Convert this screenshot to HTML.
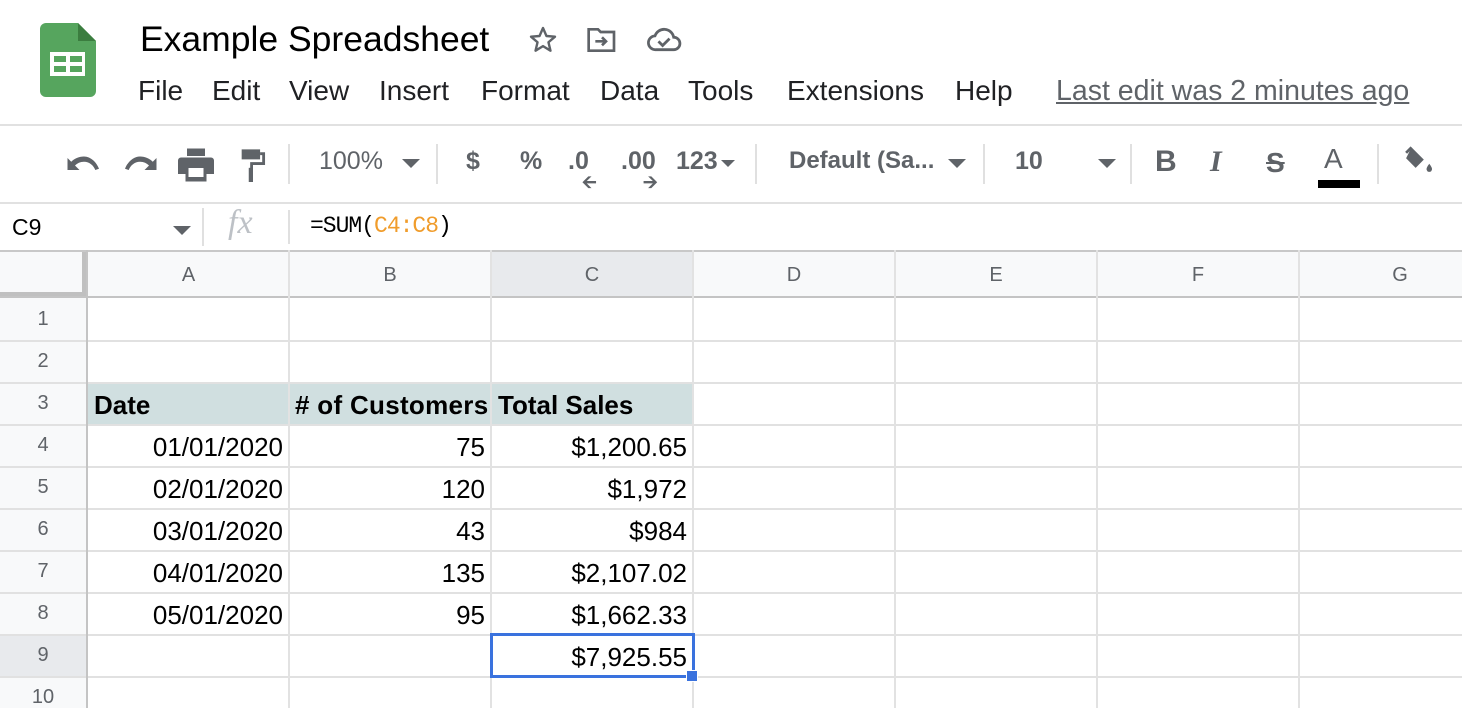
<!DOCTYPE html>
<html><head><style>
*{margin:0;padding:0;box-sizing:border-box}
body{width:1462px;height:708px;overflow:hidden;background:#fff;font-family:"Liberation Sans",Arial,sans-serif;position:relative}
.a{position:absolute;white-space:nowrap}
.menu{top:75px;font-size:28px;color:#202124}
.tb{top:147px;font-size:25px;color:#5f6368}
.sep{position:absolute;width:2px;background:#e0e0e0}
.hl{position:absolute;left:0;width:1462px;height:2px;background:#e1e1e1}
.vl{position:absolute;width:2px;background:#e2e2e2}
.ch{position:absolute;top:264px;font-size:20px;color:#5f6368;text-align:center}
.rn{position:absolute;left:0;width:86px;font-size:20px;color:#5f6368;text-align:center}
.c{position:absolute;font-size:26px;color:#000;text-align:right}
</style></head><body>
<svg class="a" style="left:40px;top:23px" width="56" height="74" viewBox="0 0 56 74"><path d="M6 0H38L56 18V68a6 6 0 0 1-6 6H6a6 6 0 0 1-6-6V6a6 6 0 0 1 6-6z" fill="#56a55e"/><path d="M38 0L56 18H38z" fill="#3b7d3f"/><rect x="10" y="29" width="35" height="24" fill="#fff"/><rect x="14" y="33" width="12" height="6" fill="#56a55e"/><rect x="30" y="33" width="12" height="6" fill="#56a55e"/><rect x="14" y="43" width="12" height="6" fill="#56a55e"/><rect x="30" y="43" width="12" height="6" fill="#56a55e"/></svg>
<div class="a" style="left:140px;top:19px;font-size:35.5px;color:#000">Example Spreadsheet</div>
<svg class="a" style="left:527px;top:24px" width="32" height="32" viewBox="0 0 24 24"><path d="M12 3l2.6 6 6.4.5-4.9 4.2 1.5 6.3L12 16.6 6.4 20l1.5-6.3L3 9.5 9.4 9z" fill="none" stroke="#5f6368" stroke-width="1.8" stroke-linejoin="round"/></svg>
<svg class="a" style="left:586px;top:26px" width="32" height="28" viewBox="0 0 24 20"><path d="M2 2h7l2 2h10v14H2z" fill="none" stroke="#5f6368" stroke-width="2"/><path d="M7 11h8M12 8l3 3-3 3" fill="none" stroke="#5f6368" stroke-width="2"/></svg>
<svg class="a" style="left:646px;top:26px" width="36" height="28" viewBox="0 0 26 20"><path d="M7 17a5 5 0 0 1-.5-10A7 7 0 0 1 20 8a4.5 4.5 0 0 1 0 9z" fill="none" stroke="#5f6368" stroke-width="2"/><path d="M9 11l3 3 5-5" fill="none" stroke="#5f6368" stroke-width="2"/></svg>
<div class="a menu" style="left:138px">File</div>
<div class="a menu" style="left:212px">Edit</div>
<div class="a menu" style="left:289px">View</div>
<div class="a menu" style="left:379px">Insert</div>
<div class="a menu" style="left:481px">Format</div>
<div class="a menu" style="left:600px">Data</div>
<div class="a menu" style="left:688px">Tools</div>
<div class="a menu" style="left:787px">Extensions</div>
<div class="a menu" style="left:955px">Help</div>
<div class="a menu" style="left:1056px;color:#5f6368;text-decoration:underline;font-size:28.5px">Last edit was 2 minutes ago</div>
<div class="hl" style="top:124px"></div>
<svg class="a" style="left:66px;top:150px" width="36" height="28" viewBox="0 0 24 18"><path d="M12 4C8.5 4 5.5 5.5 3.5 7.5L1 5v8h8L6 10c1.5-1.5 3.5-2.5 6-2.5 3.5 0 6.5 2.5 7.5 5.5l2.5-.8C20.5 8 16.5 4 12 4z" fill="#5f6368"/></svg>
<svg class="a" style="left:122px;top:150px" width="36" height="28" viewBox="0 0 24 18"><g transform="matrix(-1 0 0 1 24 0)"><path d="M12 4C8.5 4 5.5 5.5 3.5 7.5L1 5v8h8L6 10c1.5-1.5 3.5-2.5 6-2.5 3.5 0 6.5 2.5 7.5 5.5l2.5-.8C20.5 8 16.5 4 12 4z" fill="#5f6368"/></g></svg>
<svg class="a" style="left:178px;top:148px" width="36" height="34" viewBox="0 0 24 22"><path d="M6 0h12v5H6z M2 6h20a2 2 0 0 1 2 2v9h-5v5H5v-5H0V8a2 2 0 0 1 2-2z" fill="#5f6368"/><rect x="7" y="13" width="10" height="6" fill="#fff"/></svg>
<svg class="a" style="left:238px;top:148px" width="30" height="34" viewBox="0 0 20 24"><path d="M2 1h13v7H2z" fill="#5f6368"/><path d="M15 4h2.5v7H9v4" fill="none" stroke="#5f6368" stroke-width="2"/><rect x="7" y="14" width="3" height="10" fill="#5f6368"/></svg>
<div class="sep" style="left:288px;top:144px;height:40px"></div>
<div class="a tb" style="left:319px">100%</div>
<svg class="a" style="left:402px;top:159px" width="18" height="10"><path d="M0 0h18L9 9z" fill="#5f6368"/></svg>
<div class="sep" style="left:436px;top:144px;height:40px"></div>
<div class="a tb" style="left:466px;font-weight:bold">$</div>
<div class="a tb" style="left:520px;font-weight:bold">%</div>
<div class="a tb" style="left:568px;font-weight:bold">.0</div>
<div class="a" style="left:582px;top:170px;font-size:18px;color:#5f6368;font-weight:bold">&#129128;</div>
<div class="a tb" style="left:621px;font-weight:bold">.00</div>
<div class="a" style="left:643px;top:170px;font-size:18px;color:#5f6368;font-weight:bold">&#129130;</div>
<div class="a tb" style="left:676px;font-weight:bold">123</div>
<svg class="a" style="left:721px;top:160px" width="14" height="8"><path d="M0 0h14L7 7z" fill="#5f6368"/></svg>
<div class="sep" style="left:755px;top:144px;height:40px"></div>
<div class="a tb" style="left:789px;font-weight:bold;font-size:24px">Default (Sa...</div>
<svg class="a" style="left:948px;top:159px" width="18" height="10"><path d="M0 0h18L9 9z" fill="#5f6368"/></svg>
<div class="sep" style="left:983px;top:144px;height:40px"></div>
<div class="a tb" style="left:1015px;font-weight:bold">10</div>
<svg class="a" style="left:1098px;top:159px" width="18" height="10"><path d="M0 0h18L9 9z" fill="#5f6368"/></svg>
<div class="sep" style="left:1130px;top:144px;height:40px"></div>
<div class="a tb" style="left:1155px;font-size:30px;font-weight:bold;top:145px">B</div>
<div class="a tb" style="left:1210px;font-size:30px;font-weight:bold;font-style:italic;font-family:'Liberation Serif',serif;top:145px">I</div>
<div class="a tb" style="left:1266px;font-size:28px;font-weight:bold;text-decoration:line-through;top:147px">S</div>
<div class="a tb" style="left:1324px;font-size:28px;top:143px">A</div>
<div class="a" style="left:1318px;top:180px;width:42px;height:8px;background:#000"></div>
<div class="sep" style="left:1377px;top:144px;height:40px"></div>
<svg class="a" style="left:1400px;top:146px" width="34" height="30" viewBox="0 0 24 22"><path d="M8 1l9 9-6 6-7-7z" fill="#5f6368"/><path d="M8 1L4 5" stroke="#5f6368" stroke-width="2"/><path d="M21 13c-1.5 2-2 3-2 4a2 2 0 0 0 4 0c0-1-.5-2-2-4z" fill="#5f6368"/></svg>
<div class="hl" style="top:202px"></div>
<div class="a" style="left:12px;top:214px;font-size:23px;color:#000">C9</div>
<svg class="a" style="left:173px;top:226px" width="18" height="10"><path d="M0 0h18L9 9z" fill="#5f6368"/></svg>
<div class="sep" style="left:202px;top:208px;height:38px"></div>
<div class="a" style="left:228px;top:204px;font-size:34px;font-style:italic;color:#bdc1c6;font-family:'Liberation Serif',serif">fx</div>
<div class="sep" style="left:288px;top:210px;height:34px"></div>
<div class="a" style="left:310px;top:213px;font-size:23px;font-family:'Liberation Mono',monospace;color:#000;letter-spacing:-1px">=SUM(<span style="color:#f09c2b">C4:C8</span>)</div>
<div class="a" style="left:0;top:250px;width:1462px;height:48px;background:#f8f9fa"></div>
<div class="a" style="left:0;top:250px;width:88px;height:48px;background:#f8f9fa;border-right:6px solid #c0c0c0;border-bottom:6px solid #c0c0c0"></div>
<div class="a" style="left:491px;top:250px;width:202px;height:48px;background:#e8eaed"></div>
<div class="hl" style="top:250px;background:#c8c8c8"></div>
<div class="hl" style="top:296px;background:#c4c4c4"></div>
<div class="ch" style="left:88px;width:201px">A</div>
<div class="ch" style="left:289px;width:202px">B</div>
<div class="ch" style="left:491px;width:202px">C</div>
<div class="ch" style="left:693px;width:202px">D</div>
<div class="ch" style="left:895px;width:202px">E</div>
<div class="ch" style="left:1097px;width:202px">F</div>
<div class="ch" style="left:1299px;width:202px">G</div>
<div class="a" style="left:0;top:298px;width:88px;height:410px;background:#f8f9fa"></div>
<div class="a" style="left:0;top:634px;width:88px;height:42px;background:#e8eaed"></div>
<div class="a" style="left:88px;top:382px;width:605px;height:42px;background:#d0dfe0"></div>
<div class="hl" style="top:340px"></div>
<div class="hl" style="top:382px"></div>
<div class="hl" style="top:424px"></div>
<div class="hl" style="top:466px"></div>
<div class="hl" style="top:508px"></div>
<div class="hl" style="top:550px"></div>
<div class="hl" style="top:592px"></div>
<div class="hl" style="top:634px"></div>
<div class="hl" style="top:676px"></div>
<div class="vl" style="left:86px;top:250px;height:458px;background:#c4c4c4"></div>
<div class="vl" style="left:288px;top:250px;height:458px"></div>
<div class="vl" style="left:490px;top:250px;height:458px"></div>
<div class="vl" style="left:692px;top:250px;height:458px"></div>
<div class="vl" style="left:894px;top:250px;height:458px"></div>
<div class="vl" style="left:1096px;top:250px;height:458px"></div>
<div class="vl" style="left:1298px;top:250px;height:458px"></div>
<div class="rn" style="top:308px">1</div>
<div class="rn" style="top:350px">2</div>
<div class="rn" style="top:392px">3</div>
<div class="rn" style="top:434px">4</div>
<div class="rn" style="top:476px">5</div>
<div class="rn" style="top:518px">6</div>
<div class="rn" style="top:560px">7</div>
<div class="rn" style="top:602px">8</div>
<div class="rn" style="top:644px">9</div>
<div class="rn" style="top:686px">10</div>
<div class="c" style="left:94px;top:390px;font-weight:bold;text-align:left">Date</div>
<div class="c" style="left:295px;top:390px;font-weight:bold;text-align:left;letter-spacing:0.3px">#&nbsp;of Customers</div>
<div class="c" style="left:498px;top:390px;font-weight:bold;text-align:left">Total Sales</div>
<div class="c" style="left:88px;width:195px;top:432px">01/01/2020</div>
<div class="c" style="left:88px;width:195px;top:474px">02/01/2020</div>
<div class="c" style="left:88px;width:195px;top:516px">03/01/2020</div>
<div class="c" style="left:88px;width:195px;top:558px">04/01/2020</div>
<div class="c" style="left:88px;width:195px;top:600px">05/01/2020</div>
<div class="c" style="left:289px;width:196px;top:432px">75</div>
<div class="c" style="left:289px;width:196px;top:474px">120</div>
<div class="c" style="left:289px;width:196px;top:516px">43</div>
<div class="c" style="left:289px;width:196px;top:558px">135</div>
<div class="c" style="left:289px;width:196px;top:600px">95</div>
<div class="c" style="left:491px;width:196px;top:432px">$1,200.65</div>
<div class="c" style="left:491px;width:196px;top:474px">$1,972</div>
<div class="c" style="left:491px;width:196px;top:516px">$984</div>
<div class="c" style="left:491px;width:196px;top:558px">$2,107.02</div>
<div class="c" style="left:491px;width:196px;top:600px">$1,662.33</div>
<div class="a" style="left:490px;top:633px;width:205px;height:45px;border:3px solid #3a72de"></div>
<div class="c" style="left:491px;width:196px;top:642px">$7,925.55</div>
<div class="a" style="left:686px;top:670px;width:12px;height:12px;background:#3a72de;border:1px solid #fff"></div>
</body></html>
